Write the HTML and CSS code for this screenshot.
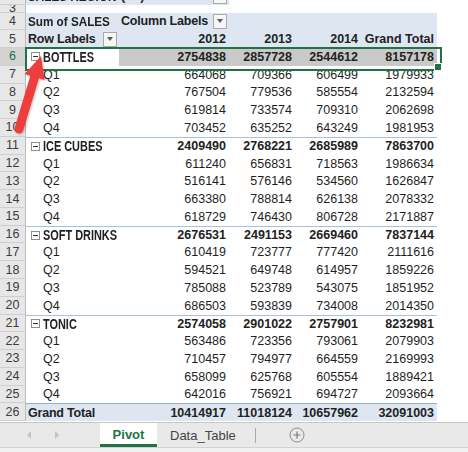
FILE: index.html
```html
<!DOCTYPE html>
<html>
<head>
<meta charset="utf-8">
<title>Pivot</title>
<link rel="stylesheet" href="styles.css">
</head>
<body>
<div class="app">
  <div class="sheet">
    <div class="row r2">
      <div class="rh">2</div>
      <div class="c l blue b"><span class="sq">SALES REGION</span></div>
      <div class="c l blue b split"><span>(All)</span><span class="dd"></span></div>
      <div class="c"></div><div class="c"></div><div class="c"></div><div class="c"></div>
    </div>
    <div class="row r3">
      <div class="rh">3</div>
      <div class="c"></div><div class="c"></div><div class="c"></div><div class="c"></div><div class="c"></div><div class="c"></div>
    </div>
    <div class="row">
      <div class="rh">4</div>
      <div class="c l blue b"><span class="sq">Sum of SALES</span></div>
      <div class="c l blue b split"><span>Column Labels</span><span class="dd"></span></div>
      <div class="c blue"></div><div class="c blue"></div><div class="c blue"></div><div class="c"></div>
    </div>
    <div class="row">
      <div class="rh">5</div>
      <div class="c l blue b split"><span>Row Labels</span><span class="dd"></span></div>
      <div class="c r blue b">2012</div>
      <div class="c r blue b">2013</div>
      <div class="c r blue b">2014</div>
      <div class="c r blue b">Grand Total</div>
      <div class="c"></div>
    </div>
    <div class="row active">
      <div class="rh on">6</div>
      <div class="c l b grp"><span class="tog"></span><span class="sq caps">BOTTLES</span></div>
      <div class="c r b hl">2754838</div>
      <div class="c r b hl">2857728</div>
      <div class="c r b hl">2544612</div>
      <div class="c r b hl">8157178</div>
      <div class="c"></div>
    </div>
    <div class="row"><div class="rh">7</div><div class="c l q">Q1</div><div class="c r">664068</div><div class="c r">709366</div><div class="c r">606499</div><div class="c r">1979933</div><div class="c"></div></div>
    <div class="row"><div class="rh">8</div><div class="c l q">Q2</div><div class="c r">767504</div><div class="c r">779536</div><div class="c r">585554</div><div class="c r">2132594</div><div class="c"></div></div>
    <div class="row"><div class="rh">9</div><div class="c l q">Q3</div><div class="c r">619814</div><div class="c r">733574</div><div class="c r">709310</div><div class="c r">2062698</div><div class="c"></div></div>
    <div class="row"><div class="rh">10</div><div class="c l q">Q4</div><div class="c r">703452</div><div class="c r">635252</div><div class="c r">643249</div><div class="c r">1981953</div><div class="c"></div></div>
    <div class="row sub">
      <div class="rh">11</div>
      <div class="c l b grp"><span class="tog"></span><span class="sq caps">ICE CUBES</span></div>
      <div class="c r b">2409490</div><div class="c r b">2768221</div><div class="c r b">2685989</div><div class="c r b">7863700</div><div class="c"></div>
    </div>
    <div class="row"><div class="rh">12</div><div class="c l q">Q1</div><div class="c r">611240</div><div class="c r">656831</div><div class="c r">718563</div><div class="c r">1986634</div><div class="c"></div></div>
    <div class="row"><div class="rh">13</div><div class="c l q">Q2</div><div class="c r">516141</div><div class="c r">576146</div><div class="c r">534560</div><div class="c r">1626847</div><div class="c"></div></div>
    <div class="row"><div class="rh">14</div><div class="c l q">Q3</div><div class="c r">663380</div><div class="c r">788814</div><div class="c r">626138</div><div class="c r">2078332</div><div class="c"></div></div>
    <div class="row"><div class="rh">15</div><div class="c l q">Q4</div><div class="c r">618729</div><div class="c r">746430</div><div class="c r">806728</div><div class="c r">2171887</div><div class="c"></div></div>
    <div class="row sub">
      <div class="rh">16</div>
      <div class="c l b grp"><span class="tog"></span><span class="sq caps">SOFT DRINKS</span></div>
      <div class="c r b">2676531</div><div class="c r b">2491153</div><div class="c r b">2669460</div><div class="c r b">7837144</div><div class="c"></div>
    </div>
    <div class="row"><div class="rh">17</div><div class="c l q">Q1</div><div class="c r">610419</div><div class="c r">723777</div><div class="c r">777420</div><div class="c r">2111616</div><div class="c"></div></div>
    <div class="row"><div class="rh">18</div><div class="c l q">Q2</div><div class="c r">594521</div><div class="c r">649748</div><div class="c r">614957</div><div class="c r">1859226</div><div class="c"></div></div>
    <div class="row"><div class="rh">19</div><div class="c l q">Q3</div><div class="c r">785088</div><div class="c r">523789</div><div class="c r">543075</div><div class="c r">1851952</div><div class="c"></div></div>
    <div class="row"><div class="rh">20</div><div class="c l q">Q4</div><div class="c r">686503</div><div class="c r">593839</div><div class="c r">734008</div><div class="c r">2014350</div><div class="c"></div></div>
    <div class="row sub">
      <div class="rh">21</div>
      <div class="c l b grp"><span class="tog"></span><span class="sq caps">TONIC</span></div>
      <div class="c r b">2574058</div><div class="c r b">2901022</div><div class="c r b">2757901</div><div class="c r b">8232981</div><div class="c"></div>
    </div>
    <div class="row"><div class="rh">22</div><div class="c l q">Q1</div><div class="c r">563486</div><div class="c r">723356</div><div class="c r">793061</div><div class="c r">2079903</div><div class="c"></div></div>
    <div class="row"><div class="rh">23</div><div class="c l q">Q2</div><div class="c r">710457</div><div class="c r">794977</div><div class="c r">664559</div><div class="c r">2169993</div><div class="c"></div></div>
    <div class="row"><div class="rh">24</div><div class="c l q">Q3</div><div class="c r">658099</div><div class="c r">625768</div><div class="c r">605554</div><div class="c r">1889421</div><div class="c"></div></div>
    <div class="row"><div class="rh">25</div><div class="c l q">Q4</div><div class="c r">642016</div><div class="c r">756921</div><div class="c r">694727</div><div class="c r">2093664</div><div class="c"></div></div>
    <div class="row total">
      <div class="rh">26</div>
      <div class="c l b blue">Grand Total</div>
      <div class="c r b blue">10414917</div><div class="c r b blue">11018124</div><div class="c r b blue">10657962</div><div class="c r b blue">32091003</div><div class="c"></div>
    </div>

    <svg class="arrow" width="468" height="422" viewBox="0 0 468 422" aria-hidden="true">
      <defs>
        <filter id="sh" x="-20%" y="-20%" width="140%" height="140%">
          <feDropShadow dx="1" dy="1" stdDeviation="1" flood-color="#000" flood-opacity="0.25"/>
        </filter>
      </defs>
      <path d="M41 56 L44.7 80.1 L38.96 78.37 L23.31 130.3 A4.5 4.5 0 0 1 14.69 127.7 L30.34 75.77 L24.6 74 Z" fill="#ee3d3d" filter="url(#sh)"/>
    </svg>
  </div>

  <div class="tabs">
    <div class="nav">
      <svg width="8" height="10" viewBox="0 0 8 10"><path d="M6 1 L2 5 L6 9 Z" fill="#c3c3c3"/></svg>
      <svg width="8" height="10" viewBox="0 0 8 10"><path d="M2 1 L6 5 L2 9 Z" fill="#c3c3c3"/></svg>
    </div>
    <div class="tab on">Pivot</div>
    <div class="tab">Data_Table</div>
    <div class="sep"></div>
    <div class="add">
      <svg width="16" height="16" viewBox="0 0 16 16"><circle cx="8" cy="8" r="7" fill="none" stroke="#8a8a8a" stroke-width="1"/><path d="M8 4.5 V11.5 M4.5 8 H11.5" stroke="#7a7a7a" stroke-width="1.2"/></svg>
    </div>
  </div>
  <div class="foot"></div>
</div>
</body>
</html>
```

FILE: styles.css
```css
* { box-sizing: border-box; }
html, body { margin: 0; padding: 0; background: #fff; }
body {
  font-family: "Liberation Sans", Arial, sans-serif;
  font-size: 12.5px;
  color: #1f1f1f;
}
.app { width: 468px; height: 452px; overflow: hidden; }
.sheet {
  position: relative;
  height: 422px;
  overflow: hidden;
}
.row {
  display: grid;
  grid-template-columns: 26px 93px 110px 66px 66px 76px 31px;
  height: 17.78px;
}
.r2 { height: 18px; margin-top: -13px; }
.r3 { height: 7.5px; }
.rh {
  background: #e7e7e7;
  color: #3c3c3c;
  border-right: 1px solid #bcbcbc;
  border-bottom: 1px solid #cfcfcf;
  display: flex;
  align-items: center;
  justify-content: center;
  overflow: hidden;
  font-size: 12.5px;
}
.rh.on { background: #d2d2d2; color: #217346; }
.c {
  display: flex;
  align-items: center;
  overflow: hidden;
  white-space: nowrap;
  padding: 0 3px;
}
.l { justify-content: flex-start; padding-left: 2px; }
.r { justify-content: flex-end; }
.b { font-weight: bold; color: #222; }
.l.b { letter-spacing: -0.2px; }
.sq {
  display: inline-block;
  font-size: 13px;
  letter-spacing: 0;
  transform: scaleX(0.9);
  transform-origin: left center;
}
.sq.caps { font-size: 14px; transform: scaleX(0.78); }
.blue { background: #dde6f1; }
.split { justify-content: space-between; padding-right: 2px; }
.q { padding-left: 17px; }
.grp { padding-left: 5px; }
.hl { background: #c9c9c9; }
.dd {
  width: 14px;
  height: 15px;
  border: 1px solid #a9a9a9;
  background: #f6f6f6;
  display: flex;
  align-items: center;
  justify-content: center;
  flex: none;
}
.dd::after {
  content: "";
  border-top: 4px solid #5a5a5a;
  border-left: 3.5px solid transparent;
  border-right: 3.5px solid transparent;
}
.tog {
  width: 9px;
  height: 9px;
  border: 1px solid #8f8f8f;
  background: #fff;
  margin-right: 3px;
  display: inline-flex;
  align-items: center;
  justify-content: center;
  flex: none;
}
.tog::after {
  content: "";
  width: 5px;
  height: 1px;
  background: #333;
}
.sub .c:nth-child(-n+6) { border-top: 1px solid #a9c1df; }
.total .c:nth-child(-n+6) { border-top: 1px solid #8eaed6; }
.active { position: relative; }
.active::after {
  content: "";
  position: absolute;
  left: 25px;
  top: -1px;
  width: 413px;
  height: 20px;
  border: 2px solid #217346;
}
.active::before {
  content: "";
  position: absolute;
  left: 434px;
  top: 15px;
  width: 6px;
  height: 6px;
  background: #217346;
  border: 1px solid #fff;
  z-index: 2;
}
.arrow {
  position: absolute;
  left: 0;
  top: 0;
  pointer-events: none;
}
.tabs {
  height: 25px;
  background: #e9e9e9;
  border-top: 1px solid #c6c6c6;
  display: flex;
  align-items: stretch;
}
.nav {
  width: 100px;
  display: flex;
  align-items: center;
  gap: 20px;
  padding-left: 25px;
}
.tab {
  display: flex;
  align-items: center;
  color: #444;
  font-size: 13px;
}
.tab.on {
  width: 57px;
  justify-content: center;
  background: #fff;
  color: #217346;
  font-weight: bold;
  border-bottom: 3px solid #217346;
  padding-top: 2px;
}
.tab:not(.on) { padding: 0 19px 0 13px; }
.sep {
  width: 1px;
  background: #a8a8a8;
  margin: 5px 0 4px;
}
.add {
  display: flex;
  align-items: center;
  padding-left: 33px;
}
.foot {
  height: 5px;
  background: #f1f1f1;
  border-top: 1px solid #d3d3d3;
}
```
